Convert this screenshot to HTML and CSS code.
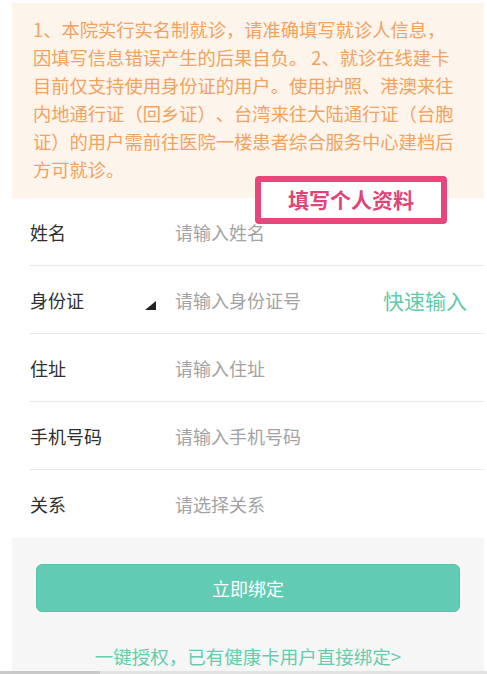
FILE: index.html
```html
<!DOCTYPE html>
<html lang="zh-CN">
<head>
    <meta charset="UTF-8">
    <meta name="viewport" content="width=device-width, initial-scale=1.0">
    <title>填写个人资料</title>
    <link rel="stylesheet" href="styles.css">
</head>
<body>
    <div class="page">
        <!-- Notice banner -->
        <div class="notice">
            1、本院实行实名制就诊，请准确填写就诊人信息，因填写信息错误产生的后果自负。 2、就诊在线建卡目前仅支持使用身份证的用户。使用护照、港澳来往内地通行证（回乡证）、台湾来往大陆通行证（台胞证）的用户需前往医院一楼患者综合服务中心建档后方可就诊。
        </div>

        <div class="tag">填写个人资料</div>

        <!-- Form rows -->
        <div class="form">
            <div class="row">
                <span class="label">姓名</span>
                <span class="field">请输入姓名</span>
            </div>
            <div class="row">
                <span class="label">身份证
                    <svg class="corner" width="11" height="9" viewBox="0 0 11 9"><polygon points="11,0 11,9 0,9" fill="#222"/></svg>
                </span>
                <span class="field">请输入身份证号</span>
                <span class="quick">快速输入</span>
            </div>
            <div class="row">
                <span class="label">住址</span>
                <span class="field">请输入住址</span>
            </div>
            <div class="row">
                <span class="label">手机号码</span>
                <span class="field">请输入手机号码</span>
            </div>
            <div class="row last">
                <span class="label">关系</span>
                <span class="field">请选择关系</span>
            </div>
        </div>

        <div class="actions">
            <button class="bind-btn">立即绑定</button>
            <div class="auth-link">一键授权，已有健康卡用户直接绑定&gt;</div>
        </div>
    </div>
    <div class="bottom-bar"><span class="bar-thumb"></span></div>
</body>
</html>
```

FILE: styles.css
```css
body {
    margin: 0;
    background: #fff;
    font-family: "Noto Sans CJK SC", "Noto Sans", sans-serif;
    color: #333;
    text-spacing-trim: space-all;
}

.page {
    position: relative;
    margin: 3px 3px 0 12px;
    width: 472px;
}

.notice {
    background: #fdf4ec;
    color: #f0a35e;
    font-size: 18.3px;
    line-height: 28px;
    padding: 12px 27px 15px 21px;
    height: 168px;
    overflow: hidden;
}

.tag {
    position: absolute;
    left: 243px;
    top: 173px;
    width: 180px;
    height: 36px;
    border: 6px solid #e8457a;
    border-radius: 4px;
    background: #fff;
    color: #e0457a;
    font-size: 21px;
    font-weight: bold;
    line-height: 34px;
    text-align: center;
}

.form {
    background: #fff;
}

.row {
    display: flex;
    align-items: center;
    height: 67px;
    margin-left: 18px;
    border-bottom: 1px solid #e8e8e8;
    font-size: 18px;
}

.row.last {
    border-bottom: none;
    height: 68px;
}

.label {
    width: 145px;
    flex-shrink: 0;
    display: flex;
    align-items: center;
    color: #2f2f2f;
}

.corner {
    margin-left: auto;
    margin-right: 19px;
    margin-top: 12px;
}

.field {
    flex: 1;
    color: #a3a3a3;
}

.quick {
    color: #62c9a9;
    font-size: 21px;
    margin-right: 17px;
}

.actions {
    background: #f6f6f6;
    padding: 26px 24px 0;
    height: 107px;
}

.bind-btn {
    display: block;
    width: 100%;
    height: 48px;
    border: 1px solid #58c2a9;
    border-radius: 6px;
    background: #62cbb3;
    color: #fff;
    font-family: inherit;
    font-size: 18px;
}

.auth-link {
    margin-top: 32px;
    text-align: center;
    color: #66ccae;
    font-size: 18.5px;
    line-height: 24px;
}

.bottom-bar {
    height: 3px;
    background: #e2e2e2;
}

.bar-thumb {
    display: block;
    width: 100px;
    height: 3px;
    background: #c9c9c9;
}
```
